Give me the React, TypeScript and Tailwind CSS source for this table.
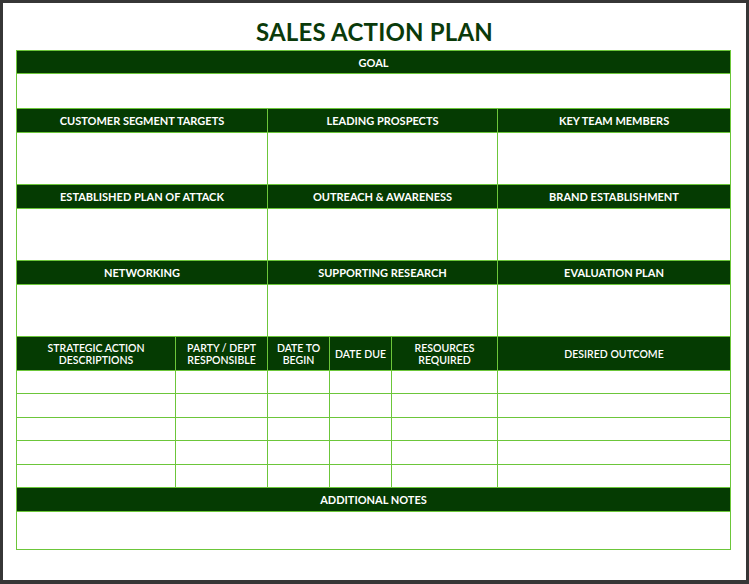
import React from "react";

const head = "bg-[#053b02] text-white font-bold text-[11px] text-center border border-[#6cc63a] p-0 leading-none";
const cell = "border border-[#6cc63a] p-0";
const sub = "bg-[#053b02] text-white text-[10.5px] text-center border border-[#6cc63a] p-0 leading-[12px]";

function Trio({ a, b, c }: { a: string; b: string; c: string }) {
    return (
        <>
            <tr className="h-[24px]">
                <th colSpan={2} className={head}>{a}</th>
                <th colSpan={3} className={head}>{b}</th>
                <th className={head}>{c}</th>
            </tr>
            <tr className="h-[52px]">
                <td colSpan={2} className={cell}></td>
                <td colSpan={3} className={cell}></td>
                <td className={cell}></td>
            </tr>
        </>
    );
}

export default function App() {
    const rows = [0, 1, 2, 3, 4];
    return (
        <div className="w-[749px] h-[584px] bg-[#363636] p-[3px] pb-[4px]" style={{ fontFamily: "Lato, 'Open Sans', sans-serif" }}>
            <div className="w-full h-full bg-white pt-[14px] px-[13px]">
                <h1 className="text-center text-[#0a3a0a] font-bold text-[24px] leading-[30px] h-[33px] tracking-[0.2px]">SALES ACTION PLAN</h1>
                <table className="w-[714px] border-collapse table-fixed">
                    <colgroup>
                        <col className="w-[159px]" />
                        <col className="w-[92px]" />
                        <col className="w-[62px]" />
                        <col className="w-[62px]" />
                        <col className="w-[106px]" />
                        <col className="w-[233px]" />
                    </colgroup>
                    <tbody>
                        <tr className="h-[23px]">
                            <th colSpan={6} className={head}>GOAL</th>
                        </tr>
                        <tr className="h-[35px]">
                            <td colSpan={6} className={cell}></td>
                        </tr>
                        <Trio a="CUSTOMER SEGMENT TARGETS" b="LEADING PROSPECTS" c="KEY TEAM MEMBERS" />
                        <Trio a="ESTABLISHED PLAN OF ATTACK" b="OUTREACH & AWARENESS" c="BRAND ESTABLISHMENT" />
                        <Trio a="NETWORKING" b="SUPPORTING RESEARCH" c="EVALUATION PLAN" />
                        <tr className="h-[34px]">
                            <th className={sub + " font-semibold"}>STRATEGIC ACTION<br />DESCRIPTIONS</th>
                            <th className={sub + " font-semibold"}>PARTY / DEPT<br />RESPONSIBLE</th>
                            <th className={sub + " font-semibold"}>DATE TO<br />BEGIN</th>
                            <th className={sub + " font-semibold"}>DATE DUE</th>
                            <th className={sub + " font-semibold"}>RESOURCES<br />REQUIRED</th>
                            <th className={sub + " font-semibold"}>DESIRED OUTCOME</th>
                        </tr>
                        {rows.map((r) => (
                            <tr key={r} className="h-[23.4px]">
                                <td className={cell}></td>
                                <td className={cell}></td>
                                <td className={cell}></td>
                                <td className={cell}></td>
                                <td className={cell}></td>
                                <td className={cell}></td>
                            </tr>
                        ))}
                        <tr className="h-[24px]">
                            <th colSpan={6} className={head}>ADDITIONAL NOTES</th>
                        </tr>
                        <tr className="h-[38px]">
                            <td colSpan={6} className={cell}></td>
                        </tr>
                    </tbody>
                </table>
            </div>
        </div>
    );
}
